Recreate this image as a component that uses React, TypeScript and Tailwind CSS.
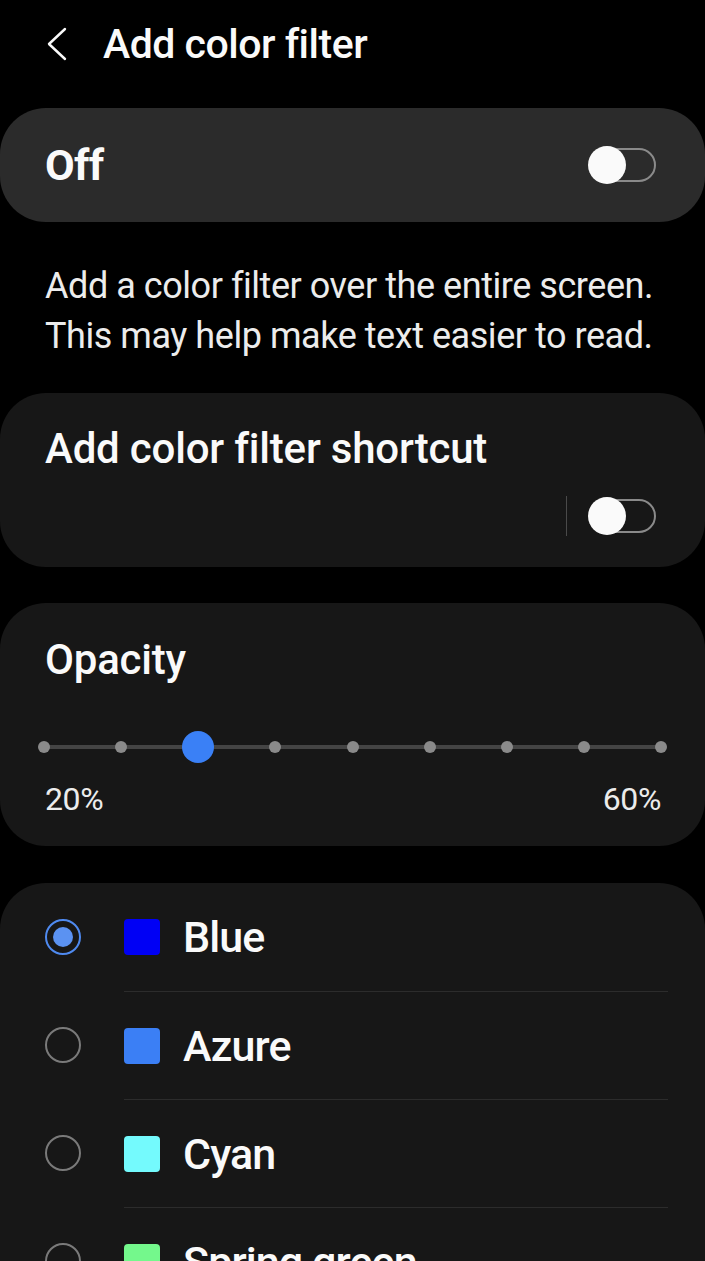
const font = "font-['Roboto','Noto_Sans',sans-serif]";

function Toggle() {
  return (
    <div className="relative h-[38px] w-[68px]">
      <div className="absolute left-[10px] right-0 top-[2px] h-[34px] rounded-full border-2 border-[#8a8a8a]" />
      <div className="absolute left-0 top-0 h-[38px] w-[38px] rounded-full bg-[#fafafa]" />
    </div>
  );
}

function Radio({ on }: { on?: boolean }) {
  if (on) {
    return (
      <div className="flex h-[36px] w-[36px] items-center justify-center rounded-full border-2 border-[#4f8af0]">
        <div className="h-[20px] w-[20px] rounded-full bg-[#5b92f2]" />
      </div>
    );
  }
  return <div className="h-[36px] w-[36px] rounded-full border-2 border-[#7a7a7a]" />;
}

const colors = [
  { name: "Blue", swatch: "bg-[#0000f5]", on: true },
  { name: "Azure", swatch: "bg-[#3b7ff5]" },
  { name: "Cyan", swatch: "bg-[#74fafd]" },
  { name: "Spring green", swatch: "bg-[#74f88c]" },
];

export default function App() {
  const steps = [0, 1, 2, 3, 4, 5, 6, 7, 8];
  return (
    <div className={`h-[1261px] w-full overflow-hidden bg-black text-[#fafafa] ${font}`}>
      <header className="flex h-[88px] items-center">
        <svg className="ml-[45px] h-[34px] w-[24px]" viewBox="0 0 24 34" fill="none">
          <path d="M20 2 L4 17 L20 32" stroke="#fafafa" strokeWidth="2.4" strokeLinecap="round" strokeLinejoin="round" />
        </svg>
        <h1 className="ml-[34px] text-[41px] font-medium leading-[50px] tracking-[-0.5px]">Add color filter</h1>
      </header>

      <div className="mt-[20px] flex h-[114px] items-center justify-between rounded-[46px] bg-[#2b2b2b] pl-[45px] pr-[49px]">
        <span className="text-[43px] font-bold tracking-[-0.7px]">Off</span>
        <Toggle />
      </div>

      <p className="px-[45px] pt-[39px] pb-[32px] text-[36px] leading-[50px] tracking-[-0.45px] text-[#ececec]">
        Add a color filter over the entire screen.
        <br />
        This may help make text easier to read.
      </p>

      <div className="flex h-[174px] flex-col rounded-[46px] bg-[#171717] pl-[45px] pr-[49px]">
        <span className="mt-[33px] text-[42px] font-medium leading-[46px] tracking-[-0.2px]">Add color filter shortcut</span>
        <div className="mt-[24px] flex items-center justify-end gap-[21px]">
          <div className="h-[40px] w-[1px] bg-[#4a4a4a]" />
          <Toggle />
        </div>
      </div>

      <div className="mt-[36px] flex h-[243px] flex-col rounded-[46px] bg-[#171717] px-[38px]">
        <span className="ml-[7px] mt-[34px] text-[42px] font-medium leading-[46px] tracking-[-0.2px]">Opacity</span>
        <div className="relative mt-[48px] flex h-[32px] items-center justify-between">
          <div className="absolute left-[6px] right-[6px] top-[14px] h-[4px] bg-[#444444]" />
          {steps.map((i) => (
            <div key={i} className="relative flex w-[12px] justify-center">
              {i === 2 ? (
                <div className="h-[32px] w-[32px] shrink-0 rounded-full bg-[#3a80f6]" />
              ) : (
                <div className="h-[12px] w-[12px] shrink-0 rounded-full bg-[#8a8a8a]" />
              )}
            </div>
          ))}
        </div>
        <div className="mt-[16px] flex justify-between px-[6px] text-[32px] leading-[40px] tracking-[-0.4px] text-[#ececec]">
          <span className="pl-[1px]">20%</span>
          <span>60%</span>
        </div>
      </div>

      <div className="mt-[37px] rounded-t-[46px] bg-[#171717] pl-[45px] pr-[37px]">
        {colors.map((c, i) => (
          <div key={c.name} className="flex h-[108px] items-center">
            <Radio on={c.on} />
            <div className={`ml-[43px] flex h-full flex-1 items-center ${i > 0 ? "border-t border-[#2c2c2c]" : ""}`}>
              <div className={`h-[36px] w-[36px] rounded-[4px] ${c.swatch}`} />
              <span className="ml-[23px] text-[43px] font-medium leading-[50px] tracking-[-0.9px]">{c.name}</span>
            </div>
          </div>
        ))}
      </div>
    </div>
  );
}
